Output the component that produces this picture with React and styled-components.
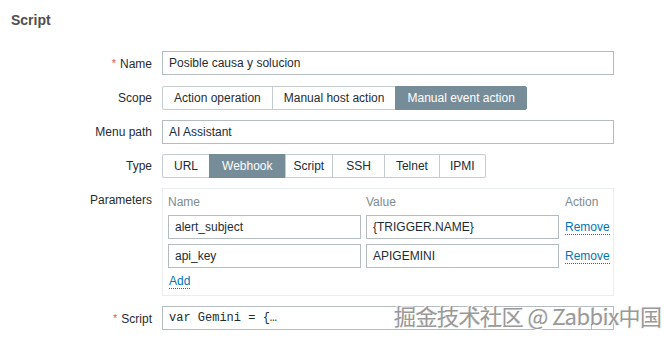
import React from 'react';
import styled, { createGlobalStyle } from 'styled-components';

const GlobalStyle = createGlobalStyle`
    body {
        margin: 0;
        background: #ffffff;
        font-family: "Liberation Sans", Arial, sans-serif;
        font-size: 12px;
        color: #1f2c33;
    }
`;

const Page = styled.div`
    position: relative;
    width: 664px;
    height: 339px;
    overflow: hidden;
    background: #ffffff;
`;

const Heading = styled.h2`
    margin: 0;
    padding: 12px 11px 0;
    font-size: 14px;
    line-height: 16px;
    font-weight: bold;
    color: #4f4f4f;
`;

const Form = styled.div`
    display: grid;
    grid-template-columns: 152px 452px;
    column-gap: 10px;
    row-gap: 10px;
    margin-top: 23px;
`;

const Label = styled.div`
    text-align: right;
    line-height: 24px;
    white-space: nowrap;
`;

const Required = styled.span`
    color: #e45959;
    font-size: 11px;
    margin-right: 4px;
    vertical-align: 1px;
`;

const TextBox = styled.div`
    box-sizing: border-box;
    height: 24px;
    border: 1px solid #b4bcc0;
    padding: 0 6px;
    line-height: 22px;
    background: #ffffff;
    white-space: nowrap;
`;

const Segments = styled.div`
    display: flex;
    height: 24px;
`;

const Segment = styled.div`
    box-sizing: border-box;
    height: 24px;
    line-height: 22px;
    padding: 0 ${p => p.$pad ?? 11}px;
    border: 1px solid ${p => (p.$active ? '#768d99' : '#c4ccd0')};
    margin-left: -1px;
    background: ${p => (p.$active ? '#768d99' : '#ffffff')};
    color: ${p => (p.$active ? '#ffffff' : '#1f2c33')};
    white-space: nowrap;

    &:first-child {
        margin-left: 0;
        border-radius: 2px 0 0 2px;
    }
    &:last-child {
        border-radius: 0 2px 2px 0;
    }
`;

const ParamBox = styled.div`
    box-sizing: border-box;
    border: 1px solid #ebeef0;
    padding: 4px 5px 5px 5px;
    height: 108px;
`;

const ParamGrid = styled.div`
    display: grid;
    grid-template-columns: 193px 193px auto;
    column-gap: 5px;
    row-gap: 5px;
    align-items: center;
`;

const ColHead = styled.div`
    color: #7d8b92;
    line-height: 18px;
    margin-bottom: -1px;
    padding-left: ${p => (p.$inset ? 1 : 0)}px;
`;

const LinkText = styled.span`
    display: inline-block;
    color: #0275b8;
    line-height: 14px;
    border-bottom: 1px dotted #0275b8;
    margin-left: ${p => p.$shift || 0}px;
`;

const AddRow = styled.div`
    margin-top: 6px;
    padding-left: 1px;
`;

const ScriptBox = styled.div`
    box-sizing: border-box;
    height: 24px;
    border: 1px solid #b4bcc0;
    display: flex;
    align-items: stretch;
`;

const Code = styled.div`
    flex: 1;
    padding: 0 6px;
    line-height: 22px;
    font-family: "Liberation Mono", "Courier New", monospace;
    font-size: 12px;
    color: #1f2c33;
`;

const EditButton = styled.div`
    width: 21px;
    border-left: 1px solid #b4bcc0;
`;

const Watermark = styled.div`
    position: absolute;
    left: 394px;
    top: 301px;
    font-family: "Noto Sans CJK SC", "Liberation Sans", sans-serif;
    font-size: 22px;
    line-height: 28px;
    letter-spacing: -0.5px;
    color: #999999;
    white-space: nowrap;
    text-shadow: 1px 1px 0 #ffffff, -1px -1px 0 #ffffff, 0 0 1px #3c3c3c;
`;

const scopes = [
    { label: 'Action operation' },
    { label: 'Manual host action' },
    { label: 'Manual event action', active: true },
];

const types = [
    { label: 'URL', pad: 11 },
    { label: 'Webhook', pad: 12, active: true },
    { label: 'Script', pad: 8 },
    { label: 'SSH', pad: 13 },
    { label: 'Telnet', pad: 11 },
    { label: 'IPMI', pad: 10 },
];

const params = [
    { name: 'alert_subject', value: '{TRIGGER.NAME}' },
    { name: 'api_key', value: 'APIGEMINI' },
];

const App = () => {
    return (
        <Page>
            <GlobalStyle />
            <Heading>Script</Heading>
            <Form>
                <Label><Required>*</Required>Name</Label>
                <TextBox>Posible causa y solucion</TextBox>

                <Label>Scope</Label>
                <Segments>
                    {scopes.map(s => (
                        <Segment key={s.label} $active={s.active} $pad={s.pad}>{s.label}</Segment>
                    ))}
                </Segments>

                <Label>Menu path</Label>
                <TextBox>AI Assistant</TextBox>

                <Label>Type</Label>
                <Segments>
                    {types.map(t => (
                        <Segment key={t.label} $active={t.active} $pad={t.pad}>{t.label}</Segment>
                    ))}
                </Segments>

                <Label>Parameters</Label>
                <ParamBox>
                    <ParamGrid>
                        <ColHead>Name</ColHead>
                        <ColHead>Value</ColHead>
                        <ColHead $inset>Action</ColHead>
                        {params.map(p => (
                            <React.Fragment key={p.name}>
                                <TextBox>{p.name}</TextBox>
                                <TextBox>{p.value}</TextBox>
                                <div><LinkText $shift={1}>Remove</LinkText></div>
                            </React.Fragment>
                        ))}
                    </ParamGrid>
                    <AddRow><LinkText>Add</LinkText></AddRow>
                </ParamBox>

                <Label><Required>*</Required>Script</Label>
                <ScriptBox>
                    <Code>var Gemini = {'{…'}</Code>
                    <EditButton />
                </ScriptBox>
            </Form>
            <Watermark>掘金技术社区 @ Zabbix中国</Watermark>
        </Page>
    );
};

export default App;
